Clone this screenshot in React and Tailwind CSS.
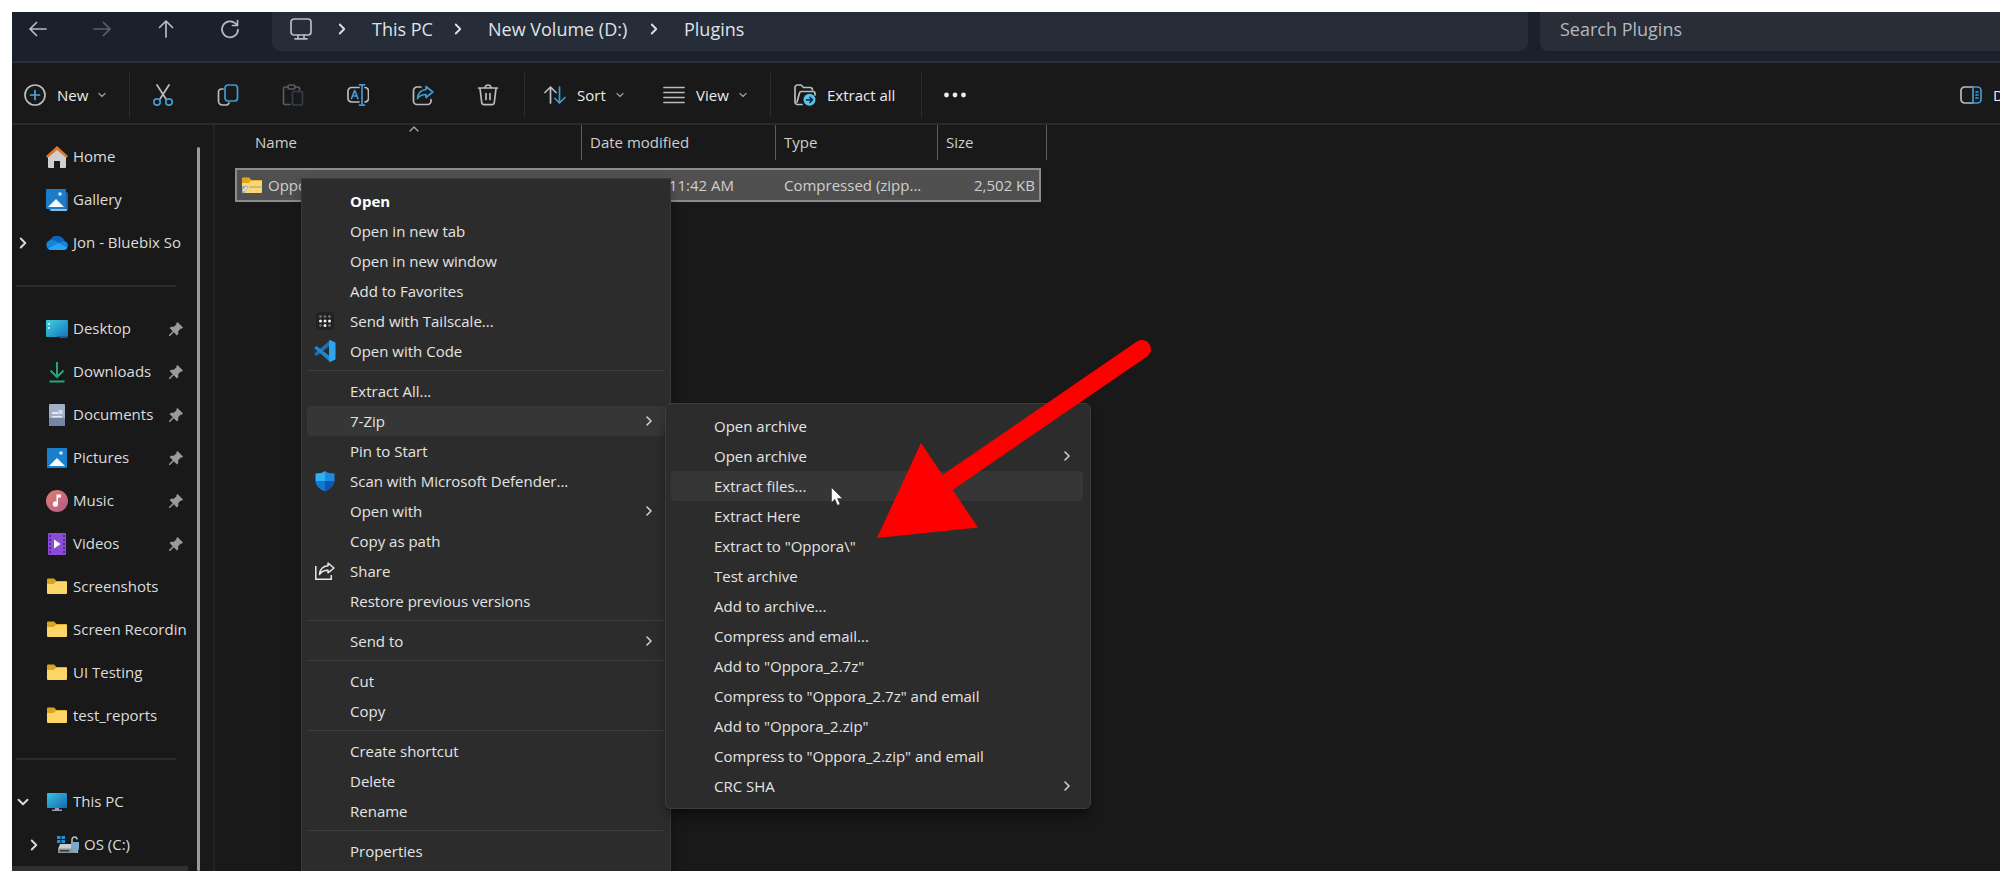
import { ChevronDown, ChevronRight, ChevronUp } from 'lucide-react';

const SIDEBAR_ITEMS = [
  { label: 'Home', icon: HomeIcon },
  { label: 'Gallery', icon: GalleryIcon },
  { label: 'Jon - Bluebix So', icon: CloudIcon, toggle: 'closed' },
  { divider: true },
  { label: 'Desktop', icon: DesktopIcon, pinned: true },
  { label: 'Downloads', icon: DownloadsIcon, pinned: true },
  { label: 'Documents', icon: DocumentsIcon, pinned: true },
  { label: 'Pictures', icon: PicturesIcon, pinned: true },
  { label: 'Music', icon: MusicIcon, pinned: true },
  { label: 'Videos', icon: VideosIcon, pinned: true },
  { label: 'Screenshots', icon: FolderIcon },
  { label: 'Screen Recordin', icon: FolderIcon },
  { label: 'UI Testing', icon: FolderIcon },
  { label: 'test_reports', icon: FolderIcon },
  { divider: true },
  { label: 'This PC', icon: ComputerIcon, toggle: 'open' },
  { label: 'OS (C:)', icon: DriveIcon, toggle: 'closed', nested: true }
];

const CONTEXT_MENU = [
  { label: 'Open', bold: true },
  { label: 'Open in new tab' },
  { label: 'Open in new window' },
  { label: 'Add to Favorites' },
  { label: 'Send with Tailscale...', icon: TailscaleIcon },
  { label: 'Open with Code', icon: CodeIcon },
  { divider: true },
  { label: 'Extract All...' },
  { label: '7-Zip', submenu: true, active: true },
  { label: 'Pin to Start' },
  { label: 'Scan with Microsoft Defender...', icon: ShieldIcon },
  { label: 'Open with', submenu: true },
  { label: 'Copy as path' },
  { label: 'Share', icon: ShareIcon },
  { label: 'Restore previous versions' },
  { divider: true },
  { label: 'Send to', submenu: true },
  { divider: true },
  { label: 'Cut' },
  { label: 'Copy' },
  { divider: true },
  { label: 'Create shortcut' },
  { label: 'Delete' },
  { label: 'Rename' },
  { divider: true },
  { label: 'Properties' }
];

const ZIP_MENU = [
  { label: 'Open archive' },
  { label: 'Open archive', submenu: true },
  { label: 'Extract files...', active: true },
  { label: 'Extract Here' },
  { label: 'Extract to "Oppora\\"' },
  { label: 'Test archive' },
  { label: 'Add to archive...' },
  { label: 'Compress and email...' },
  { label: 'Add to "Oppora_2.7z"' },
  { label: 'Compress to "Oppora_2.7z" and email' },
  { label: 'Add to "Oppora_2.zip"' },
  { label: 'Compress to "Oppora_2.zip" and email' },
  { label: 'CRC SHA', submenu: true }
];

/* ---------- sidebar icons ---------- */

function HomeIcon() {
  return (
    <svg viewBox="0 0 22 22" className="size-[22px]">
      <path d="M2 11 11 3l9 8v10a1 1 0 0 1-1 1h-5v-7H8v7H3a1 1 0 0 1-1-1z" fill="#cfcfcf" />
      <path d="M11 0 22 10l-1.500 2L11 4 1.500 12 0 10z" fill="#d9772b" />
    </svg>
  );
}

function GalleryIcon() {
  return (
    <svg viewBox="0 0 22 22" className="size-[22px]">
      <rect x="3" y="3" width="19" height="19" rx="2" fill="#1d5f9e" />
      <path d="M4 20h17v1a1 1 0 0 1-1 1H5z" fill="#8cbbe0" />
      <rect x="0" y="0" width="20" height="20" rx="1" fill="#1c7cc8" />
      <path d="m2 18 8-8 8 8z" fill="#f4fafe" />
      <circle cx="14" cy="5" r="1.800" fill="#cfe8f8" />
    </svg>
  );
}

function CloudIcon() {
  return (
    <svg viewBox="0 0 22 15" className="h-[15px] w-[22px]">
      <path d="M5 15a5 5 0 0 1-1-9.800A8 8 0 0 1 18.500 6 4.600 4.600 0 0 1 17.500 15z" fill="#1285dc" />
      <path d="M4 5.200A8 8 0 0 1 18.500 6c-2.500-.2-4 .8-5.500 2C10 6 7 4.700 4 5.200z" fill="#0b62b8" />
      <path d="M2 13.500 13 8l8 4.500c-.7 1.500-2 2.500-3.500 2.500H5c-1.200 0-2.200-.6-3-1.500z" fill="#2fa1f2" />
    </svg>
  );
}

function DesktopIcon() {
  return (
    <svg viewBox="0 0 22 18" className="h-[18px] w-[22px]">
      <defs>
        <linearGradient id="desk" x1="0" y1="0" x2="1" y2="1">
          <stop offset="0" stopColor="#3fd0dc" />
          <stop offset="1" stopColor="#1673c0" />
        </linearGradient>
      </defs>
      <rect width="22" height="17" rx="1" fill="url(#desk)" />
      <path d="M2 3h2v2H2zM2 7h2v2H2z" fill="#aef2f2" />
      <path d="M11 16h10v2h-7z" fill="#1b5f9c" />
    </svg>
  );
}

function DownloadsIcon() {
  return (
    <svg viewBox="0 0 22 22" className="size-[22px]" fill="none" stroke="#27a37a" strokeWidth="2">
      <path d="M11 1v14M4.500 9.500 11 16l6.500-6.500M3.500 20.500h15" />
    </svg>
  );
}

function DocumentsIcon() {
  return (
    <svg viewBox="0 0 22 22" className="size-[22px]">
      <rect x="3" y="0" width="16" height="22" rx="1" fill="#a3afc7" />
      <rect x="3" y="14" width="16" height="8" fill="#7685a4" />
      <path d="M6 8h6v2H6zM6 12h10v1.500H6z" fill="#e4eaf4" />
      <path d="M12.500 6h4v4h-4z" fill="#d3dcec" />
    </svg>
  );
}

function PicturesIcon() {
  return (
    <svg viewBox="0 0 22 22" className="size-[22px]">
      <rect x="1" y="1" width="20" height="20" rx="1" fill="#1c7fca" />
      <path d="m3 19 8-8 8 8z" fill="#f4fafe" />
      <circle cx="15" cy="6" r="1.800" fill="#cfe8f8" />
    </svg>
  );
}

function MusicIcon() {
  return (
    <svg viewBox="0 0 22 22" className="size-[22px]">
      <defs>
        <linearGradient id="music" x1="0" y1="0" x2="1" y2="1">
          <stop offset="0" stopColor="#e07f6b" />
          <stop offset="1" stopColor="#b4598f" />
        </linearGradient>
      </defs>
      <circle cx="11" cy="11" r="11" fill="url(#music)" />
      <path d="M10.500 4.500h4.500v3h-3V14a2.600 2.600 0 1 1-1.500-2.300z" fill="#fff" />
    </svg>
  );
}

function VideosIcon() {
  return (
    <svg viewBox="0 0 22 22" className="size-[22px]">
      <rect x="2" y="0" width="18" height="22" rx="1" fill="#8a4bd6" />
      <path d="M8 6.500v9l6.500-4.500z" fill="#fff" />
      <path d="M4 2v18M18 2v18" stroke="#5a2a9c" strokeWidth="2" strokeDasharray="2 2" />
    </svg>
  );
}

function FolderIcon() {
  return (
    <svg viewBox="0 0 22 17" className="h-[17px] w-[22px]">
      <path d="M1 1.500A1 1 0 0 1 2 .5h6l2.500 2.500H20a1 1 0 0 1 1 1v3H1z" fill="#d9a520" />
      <path d="M1 6h6.500L10 3.800h11V15a1 1 0 0 1-1 1H2a1 1 0 0 1-1-1z" fill="#fbd667" />
    </svg>
  );
}

function ZipFolderIcon() {
  return (
    <svg viewBox="0 0 22 17" className="h-[17px] w-[22px] shrink-0">
      <path d="M1 1.500A1 1 0 0 1 2 .5h6l2.500 2.500H20a1 1 0 0 1 1 1v3H1z" fill="#e3a51c" />
      <path d="M1 6h6.500L10 3.800h11V15a1 1 0 0 1-1 1H2a1 1 0 0 1-1-1z" fill="#f7d778" />
      <path d="M8 10h12.500" stroke="#cfae62" strokeWidth="1.500" />
      <path d="M1 9h6v2l-3 3v2H1z" fill="#a7a7a7" />
      <path d="m2 14 4-4" stroke="#f0f0f0" strokeWidth="1.500" />
    </svg>
  );
}

function ComputerIcon() {
  return (
    <svg viewBox="0 0 22 18" className="h-[18px] w-[22px]">
      <defs>
        <linearGradient id="pc" x1="0" y1="0" x2="1" y2="1">
          <stop offset="0" stopColor="#38c3e2" />
          <stop offset="1" stopColor="#1468b0" />
        </linearGradient>
      </defs>
      <rect x="1" width="20" height="15" rx="1" fill="url(#pc)" />
      <path d="M9 15h4v1.500h3V18H6v-1.500h3z" fill="#8fa0ac" />
    </svg>
  );
}

function DriveIcon() {
  return (
    <svg viewBox="0 0 22 18" className="h-[18px] w-[22px]">
      <path d="M0 0h3.500v3H0zM4.500 0H8v3H4.500zM0 4h3.500v3H0zM4.500 4H8v3H4.500z" fill="#2c8fd0" />
      <path d="M3 8h14l4 5v4H1v-4z" fill="#c9cdd0" />
      <path d="M1 12.500h19V17H1z" fill="#8b9094" />
      <path d="M3 14h9v1.500H3z" fill="#2f3a36" />
      <path d="M15 6V3.500a2.500 2.500 0 0 1 5 0" fill="none" stroke="#b9c4cc" strokeWidth="1.500" />
      <path d="M14 6h8v6c0 2.500-2 4-4 5-2-1-4-2.500-4-5z" fill="#7da7c8" />
    </svg>
  );
}

function PinIcon() {
  return (
    <svg viewBox="0 0 16 16" className="size-4 shrink-0" fill="#9a9a9a">
      <path d="m9.500 1 5.500 5.500-1.300 1.200-.9-.2-2.600 2.700.1 2.800-1.400 1.400-3.100-3.100L2 15H1v-1l3.700-3.800-3.100-3.100L3 5.700l2.800.1 2.700-2.600-.2-.9z" />
    </svg>
  );
}

/* ---------- context menu icons ---------- */

function TailscaleIcon() {
  return (
    <svg viewBox="0 0 18 18" className="size-[18px]">
      <rect width="18" height="18" rx="3" fill="#222" />
      <g fill="#777">
        <circle cx="4.500" cy="4.500" r="1.300" />
        <circle cx="9" cy="4.500" r="1.300" />
        <circle cx="13.500" cy="4.500" r="1.300" />
        <circle cx="4.500" cy="13.500" r="1.300" />
        <circle cx="13.500" cy="13.500" r="1.300" />
      </g>
      <g fill="#eee">
        <circle cx="4.500" cy="9" r="1.500" />
        <circle cx="9" cy="9" r="1.500" />
        <circle cx="13.500" cy="9" r="1.500" />
        <circle cx="9" cy="13.500" r="1.500" />
      </g>
    </svg>
  );
}

function CodeIcon() {
  return (
    <svg viewBox="0 0 22 22" className="size-[22px]">
      <path d="M15.500 6 2.500 16 .5 14.600v-1L16 .3z" fill="#1b6fb5" />
      <path d="M15.500 16 2.500 6 .5 7.400v1L16 21.700z" fill="#1f86d2" />
      <path d="m16 0 5.500 2.500v17L16 22l-1-.5V.5z" fill="#2ea3ee" />
    </svg>
  );
}

function ShieldIcon() {
  return (
    <svg viewBox="0 0 20 20" className="size-5">
      <path d="M10 0c2.500 1.800 5.500 2.500 9.500 2.500V9c0 5.500-4 9-9.500 11z" fill="#1a8be0" />
      <path d="M10 0C7.500 1.800 4.500 2.500.5 2.500V9c0 5.500 4 9 9.500 11z" fill="#2fb0f4" />
      <path d="M10 10h9.400C19 15 15 18.300 10 20z" fill="#0c57b4" />
      <path d="M10 10H.6C1 15 5 18.300 10 20z" fill="#1475cf" />
    </svg>
  );
}

function ShareIcon() {
  return (
    <svg viewBox="0 0 20 18" className="h-[18px] w-5" fill="none" stroke="#e6e6e6" strokeWidth="1.500">
      <path d="M.8 4v13.200h15.500V13" />
      <path d="M13 1.200 19 6l-6 4.800V8.300C9 8.200 6.500 9.500 4.500 12.500 5 7.500 8 4.200 13 3.800z" strokeLinejoin="round" />
    </svg>
  );
}

/* ---------- navigation and toolbar icons ---------- */

function Glyph({ children, dim }) {
  return (
    <svg
      viewBox="0 0 22 22"
      className={dim ? 'size-[22px] shrink-0 opacity-40' : 'size-[22px] shrink-0'}
      fill="none"
      stroke="#b9bcc0"
      strokeWidth="1.700"
      strokeLinecap="round"
      strokeLinejoin="round"
    >
      {children}
    </svg>
  );
}

function ToolButton({ label, children, dim }) {
  return (
    <button type="button" aria-label={label} className="flex h-10 w-8 items-center justify-center">
      <Glyph dim={dim}>{children}</Glyph>
    </button>
  );
}

function Divider() {
  return <span className="h-11 w-px shrink-0 bg-[#2c2c2c]" />;
}

function Crumb({ label, className }) {
  return (
    <>
      <span className="flex h-[34px] w-[60px] shrink-0 items-center justify-center">
        <ChevronRight size={18} strokeWidth={2.4} />
      </span>
      <button type="button" className={`shrink-0 text-left whitespace-nowrap ${className}`}>
        {label}
      </button>
    </>
  );
}

function NavBar() {
  return (
    <header className="flex h-[51px] shrink-0 border-b-2 border-[#2b2e33] bg-[#1a202c]">
      <nav aria-label="History" className="flex h-[34px] w-[260px] shrink-0 items-center gap-8 pl-2.5">
        <ToolButton label="Back">
          <path d="M19 11H3M9.500 4.500 3 11l6.500 6.500" />
        </ToolButton>
        <ToolButton label="Forward" dim>
          <path d="M3 11h16M12.500 4.500 19 11l-6.500 6.500" />
        </ToolButton>
        <ToolButton label="Up">
          <path d="M11 19V3M4.500 9.500 11 3l6.500 6.500" />
        </ToolButton>
        <ToolButton label="Refresh">
          <path d="M19 11.500A8 8 0 1 1 16.500 5.500L18.500 7.500M18.500 2.500v5h-5" />
        </ToolButton>
      </nav>

      <div className="flex h-[39px] flex-1 items-start rounded-b-lg bg-[#262d38] pl-[18px] text-[18px] leading-[34px] text-[#dfe2e6]">
        <span className="flex h-[34px] w-[22px] items-center">
          <Glyph>
            <rect x="1" y="1" width="20" height="16" rx="3" />
            <path d="M8 17v3.500M14 17v3.500M5 20.800h12" />
          </Glyph>
        </span>
        <Crumb label="This PC" className="w-14" />
        <Crumb label="New Volume (D:)" className="w-[136px]" />
        <Crumb label="Plugins" className="w-16" />
      </div>

      <input
        type="search"
        aria-label="Search Plugins"
        placeholder="Search Plugins"
        className="ml-3 h-[39px] w-[460px] rounded-bl-lg bg-[#292d37] px-5 pb-[5px] text-[18px] placeholder:text-[#b4b8be] focus:outline-none"
      />
    </header>
  );
}

function Toolbar() {
  return (
    <div role="toolbar" className="flex h-[62px] shrink-0 items-center border-b-2 border-[#2b2b2b] pt-1 pl-3 text-[15px] text-[#ececec]">
      <button type="button" className="flex h-10 w-[105px] items-center">
        <Glyph>
          <circle cx="11" cy="11" r="10" />
          <path d="M11 6.500v9M6.500 11h9" stroke="#4aa8d8" />
        </Glyph>
        <span className="ml-[11px]">New</span>
        <ChevronDown size={12} strokeWidth={2.6} className="ml-2 text-[#999]" />
      </button>
      <Divider />

      <div className="ml-[17px] flex w-[377px] gap-[33px]">
        <ToolButton label="Cut">
          <path d="m5 1 9 14M17 1 8 15" />
          <circle cx="5" cy="18" r="3.200" stroke="#3f9bd1" />
          <circle cx="17" cy="18" r="3.200" stroke="#3f9bd1" />
        </ToolButton>
        <ToolButton label="Copy">
          <path d="M6 5H4.500A3 3 0 0 0 1.500 8v9a4 4 0 0 0 4 4H9a3 3 0 0 0 3-2" />
          <rect x="8" y="1" width="12.500" height="16" rx="3" stroke="#3f9bd1" />
        </ToolButton>
        <ToolButton label="Paste" dim>
          <path d="M8 20.500H3a1.500 1.500 0 0 1-1.500-1.500V4.500A1.500 1.500 0 0 1 3 3h3M13 3h3a1.500 1.500 0 0 1 1.500 1.500V6" />
          <rect x="6" y="1" width="7" height="4" rx="1.500" />
          <rect x="10.500" y="7.500" width="10" height="13.500" rx="1.500" stroke="#58779a" />
        </ToolButton>
        <ToolButton label="Rename">
          <path d="M12 3.500H4.500a3.500 3.500 0 0 0-3.500 3.500v7.500a3.500 3.500 0 0 0 3.500 3.500H12M18 3.500a3.500 3.500 0 0 1 3.500 3.500v7.500A3.500 3.500 0 0 1 18 18" />
          <path d="m4.500 14.500 3.200-8 3.200 8M5.500 12h4.400M12.500.8h5M12.500 21.200h5M15 1v20" stroke="#3f9bd1" />
        </ToolButton>
        <ToolButton label="Share">
          <path d="M9 3H5a3.500 3.500 0 0 0-3.500 3.500V17A3.500 3.500 0 0 0 5 20.500h10.500A3.500 3.500 0 0 0 19 17v-1.500" />
          <path d="M14 2.500 20.800 8 14 13.500v-3c-4 0-6.500 1.200-8.500 4C6 9.500 9 6 14 5.500z" stroke="#3f9bd1" />
        </ToolButton>
        <ToolButton label="Delete">
          <path d="M1.500 4h19M8 4a3 3 0 0 1 6 0M3 4.500l1.700 14a2.500 2.500 0 0 0 2.500 2.200h7.600a2.500 2.500 0 0 0 2.500-2.200L19 4.500M9 9.500v6M13 9.500v6" />
        </ToolButton>
      </div>
      <Divider />

      <button type="button" className="ml-[19px] flex h-10 w-[119px] items-center">
        <Glyph>
          <path d="M6.500 19V3M1 8.500 6.500 3 12 8.500" />
          <path d="M15.500 3v16M11 14.500l4.500 4.500 5.500-5.500" stroke="#3f9bd1" />
        </Glyph>
        <span className="ml-[11px]">Sort</span>
        <ChevronDown size={12} strokeWidth={2.6} className="ml-2 text-[#999]" />
      </button>
      <button type="button" className="flex h-10 w-[107px] items-center">
        <Glyph>
          <path d="M1 3.500h20M1 8.500h20M1 13.500h20M1 18.500h20" />
        </Glyph>
        <span className="ml-[11px]">View</span>
        <ChevronDown size={12} strokeWidth={2.6} className="ml-2 text-[#999]" />
      </button>
      <Divider />

      <button type="button" className="ml-[23px] flex h-10 w-[127px] items-center whitespace-nowrap">
        <Glyph>
          <path d="M8 20.500H3.500A2.500 2.500 0 0 1 1 18V3.500A2.500 2.500 0 0 1 3.500 1H7l2.500 2.500h6.500A2.500 2.500 0 0 1 18.500 6" />
          <path d="M3 18 5.500 9a2 2 0 0 1 2-1.500H19a2 2 0 0 1 2 2V11" />
          <circle cx="15.500" cy="15.800" r="6" fill="#5cc3f0" stroke="none" />
          <path d="M12.500 15.800h6M16 13.300l2.500 2.500-2.500 2.500" stroke="#12354a" />
        </Glyph>
        <span className="ml-[11px]">Extract all</span>
      </button>
      <Divider />

      <button type="button" aria-label="More" className="ml-[22px] flex h-10 items-center">
        <svg viewBox="0 0 22 6" className="h-1.5 w-[22px]" fill="#ececec">
          <circle cx="2.500" cy="3" r="2.400" />
          <circle cx="11" cy="3" r="2.400" />
          <circle cx="19.500" cy="3" r="2.400" />
        </svg>
      </button>

      <button type="button" aria-label="Details" className="ml-auto flex h-10 w-10 items-center overflow-hidden whitespace-nowrap">
        <Glyph>
          <path d="M13 3H4.500A3.500 3.500 0 0 0 1 6.500v9A3.500 3.500 0 0 0 4.500 19H13" />
          <path d="M13 3v16h4.500a3.500 3.500 0 0 0 3.500-3.500v-9A3.500 3.500 0 0 0 17.500 3zM16 8h2M16 11h2M16 14h2" stroke="#3f9bd1" />
        </Glyph>
        <span className="ml-[11px]">D</span>
      </button>
    </div>
  );
}

function SidebarRow({ item }) {
  if (item.divider) {
    return (
      <li className="flex h-[43px] items-center pr-3 pl-1">
        <span className="h-0.5 w-full bg-[#2b2b2b]" />
      </li>
    );
  }

  const Icon = item.icon;

  return (
    <li className={item.nested ? 'flex h-[43px] items-center pl-[11px]' : 'flex h-[43px] items-center'}>
      <span className="flex w-[34px] shrink-0 justify-center pr-3 text-[#d8d8d8]">
        {item.toggle === 'closed' && <ChevronRight size={18} strokeWidth={2.6} className="shrink-0" />}
        {item.toggle === 'open' && <ChevronDown size={18} strokeWidth={2.6} className="shrink-0" />}
      </span>
      <a href="#" className="flex min-w-0 flex-1 items-center">
        <span className="flex w-[22px] shrink-0 justify-center">
          <Icon />
        </span>
        <span className="ml-[5px] flex-1 whitespace-nowrap">{item.label}</span>
        {item.pinned && (
          <span className="mr-1">
            <PinIcon />
          </span>
        )}
      </a>
    </li>
  );
}

function Sidebar() {
  return (
    <aside className="flex w-[203px] shrink-0 border-r-2 border-[#242424] text-[15px] text-[#dcdcdc]">
      <ul className="w-44 pt-2.5">
        {SIDEBAR_ITEMS.map((item, index) => (
          <SidebarRow key={index} item={item} />
        ))}
        <li className="h-[43px] bg-[#2f2f2f]" />
      </ul>
      <div className="mt-[22px] ml-[9px] w-[3px] rounded-full bg-[#9b9b9b]" />
    </aside>
  );
}

function HeaderCell({ label, sorted, last }) {
  return (
    <th scope="col" className="h-[43px] p-0 text-left align-top font-normal">
      <div className={`relative flex h-[35px] items-center ${sorted ? 'pl-5' : 'pl-2'} ${last ? '' : 'border-r border-[#5c5c5c]'}`}>
        {label}
        {sorted && (
          <span className="absolute inset-x-0 -top-1 flex justify-center pl-3">
            <ChevronUp size={16} strokeWidth={1.8} className="text-[#aaa]" />
          </span>
        )}
      </div>
    </th>
  );
}

function FileList() {
  return (
    <main className="min-w-0 flex-1 pl-5 text-[15px] text-[#cfcfcf]">
      <table className="w-[812px] table-fixed border-separate border-spacing-0">
        <colgroup>
          <col className="w-[347px]" />
          <col className="w-[194px]" />
          <col className="w-[162px]" />
          <col className="w-[103px]" />
          <col className="w-[6px]" />
        </colgroup>
        <thead>
          <tr>
            <HeaderCell label="Name" sorted />
            <HeaderCell label="Date modified" />
            <HeaderCell label="Type" />
            <HeaderCell label="Size" last />
            <td className="p-0 align-top">
              <div className="h-[35px] border-r border-[#5c5c5c]" />
            </td>
          </tr>
        </thead>
        <tbody>
          <tr>
            <td className="h-[34px] border-2 border-r-0 border-[#8c8c8c] bg-[#505050] p-0 pl-1">
              <span className="flex items-center gap-[5px]">
                <ZipFolderIcon />
                Oppora_2.zip
              </span>
            </td>
            <td className="border-y-2 border-[#8c8c8c] bg-[#505050] p-0 pr-[42px] text-right whitespace-nowrap">7/18/2025 11:42 AM</td>
            <td className="border-y-2 border-[#8c8c8c] bg-[#505050] p-0 pl-2 whitespace-nowrap">Compressed (zipp...</td>
            <td className="border-2 border-l-0 border-[#8c8c8c] bg-[#505050] p-0 pr-1 text-right whitespace-nowrap">2,502 KB</td>
            <td className="p-0" />
          </tr>
        </tbody>
      </table>
    </main>
  );
}

function MenuItem({ item }) {
  if (item.divider) {
    return <li role="separator" className="mt-1 mb-[5px] h-px bg-[#3d3d3d]" />;
  }

  const Icon = item.icon;

  return (
    <li>
      <button
        type="button"
        role="menuitem"
        className={`flex h-[30px] w-full items-center rounded-sm text-left whitespace-nowrap ${item.active ? 'bg-[#363636]' : ''} ${item.bold ? 'font-bold text-white' : ''}`}
      >
        <span className="flex w-[43px] shrink-0 justify-center pr-2">{Icon && <Icon />}</span>
        <span className="flex-1">{item.label}</span>
        {item.submenu && <ChevronRight size={16} strokeWidth={2.4} className="mr-2 text-[#cfcfcf]" />}
      </button>
    </li>
  );
}

function Pointer() {
  return (
    <svg viewBox="0 0 12 19" className="absolute top-[487px] left-[831px] h-[19px] w-3">
      <path d="M.5.500v15l3.400-3.200 2.500 6 2.600-1.100-2.500-5.800h4.900z" fill="#fff" stroke="#222" strokeWidth=".5" />
    </svg>
  );
}

function RedArrow() {
  return (
    <svg viewBox="0 0 280 200" className="absolute top-[340px] left-[875px] h-[200px] w-[280px]">
      <path d="M267 9 60 151" stroke="#ff0000" strokeWidth="18" strokeLinecap="round" />
      <path d="M2 198 46 103l57 84.500z" fill="#ff0000" />
    </svg>
  );
}

export default function App() {
  return (
    <div className="relative h-screen overflow-hidden bg-white pt-3 pl-3 font-['Open_Sans','Noto_Sans',sans-serif]">
      <div className="flex h-full flex-col bg-[#191919]">
        <NavBar />
        <Toolbar />
        <div className="flex min-h-0 flex-1 overflow-hidden">
          <Sidebar />
          <FileList />
        </div>
      </div>

      <ul role="menu" className="absolute top-[178px] left-[301px] w-[370px] border border-[#3a3a3a] bg-[#2c2c2c] py-[7px] pr-[5px] pl-[5px] text-[15px] text-[#e4e4e4] shadow-lg shadow-black/40">
        {CONTEXT_MENU.map((item, index) => (
          <MenuItem key={index} item={item} />
        ))}
      </ul>

      <ul role="menu" className="absolute top-[403px] left-[665px] w-[426px] rounded-md border border-[#3d3d3d] bg-[#2c2c2c] py-[7px] pr-[7px] pl-[5px] text-[15px] text-[#e4e4e4] shadow-lg shadow-black/40">
        {ZIP_MENU.map((item, index) => (
          <MenuItem key={index} item={item} />
        ))}
      </ul>

      <Pointer />
      <RedArrow />
    </div>
  );
}
